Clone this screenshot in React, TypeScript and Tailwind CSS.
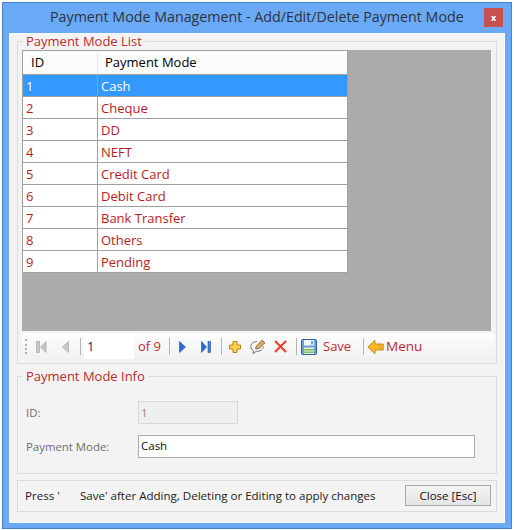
const rows = ["Cash", "Cheque", "DD", "NEFT", "Credit Card", "Debit Card", "Bank Transfer", "Others", "Pending"];
const font = "font-['Open_Sans','Noto_Sans',sans-serif]";

function Sep({ className }: { className: string }) {
  return <div className={`w-px h-[17px] bg-[#b4b4b4] shrink-0 ${className}`} />;
}

function Legend({ children }: { children: string }) {
  return <span className="absolute left-[5px] -top-[8px] bg-[#f3f3f3] px-[3px] text-[13px] leading-[15px] text-[#bd2a2e] whitespace-nowrap">{children}</span>;
}

export default function App() {
  return (
    <div className={`${font} w-[514px] h-[530px] bg-white pt-[2px] px-[2px] pb-[1px]`}>
      <div className="w-[510px] h-[527px] bg-[#6aa9f5] border border-[#4a82c4] flex flex-col">
        <div className="h-[30px] relative flex items-center shrink-0 pb-[2px]">
          <span className="ml-[47px] text-[14.25px] leading-[20px] text-[#2c3440] whitespace-nowrap">Payment Mode Management - Add/Edit/Delete Payment Mode</span>
          <span className="absolute left-[481px] top-[5px] w-[19px] h-[19px] bg-[#c75050] text-white text-[9px] font-bold flex items-center justify-center">x</span>
        </div>
        <div className="mx-[6px] h-[490px] bg-[#f3f3f3] border border-[#f6f9fe] px-[7px] pt-[7px]">
          <div className="relative h-[323px] border border-[#dcdcdc] pl-[4px] pr-[5px] pt-[8px]">
            <Legend>Payment Mode List</Legend>
            <div className="h-[281px] bg-[#ababab]">
              <div className="w-[326px] bg-white">
                <div className="flex h-[24px] bg-[#fcfcfc] border-l border-t border-r border-[#a0a0a0] text-[13px] text-black">
                  <div className="w-[75px] pl-[8px] leading-[22px] border-r border-[#e8edf5]">ID</div>
                  <div className="pl-[7px] leading-[22px]">Payment Mode</div>
                </div>
                {rows.map((r, i) => (
                  <div
                    key={r}
                    className={`flex h-[22px] border-t border-x border-[#a0a0a0] text-[13px] leading-[23px] last:border-b last:h-[23px] ${i === 0 ? "bg-[#3399ff] text-white" : "bg-white text-[#b81c1c]"}`}
                  >
                    <div className="w-[75px] pl-[3px] border-r border-[#a0a0a0]">{i + 1}</div>
                    <div className="pl-[3px]">{r}</div>
                  </div>
                ))}
              </div>
            </div>
            <div className="mt-[2px] h-[27px] w-[473px] rounded-sm bg-gradient-to-b from-[#fdfdfd] to-[#f1f1f1] flex items-center text-[13px] text-[#bd2a2e]">
              <div className="ml-[3px] w-[2px] h-[15px] border-l-2 border-dotted border-[#b0b0b0]" />
              <svg className="ml-[8px] shrink-0" width="12" height="14" viewBox="0 0 12 14">
                <rect x="1.500" y="1.500" width="3" height="11" fill="#c8c8c8" stroke="#a8a8a8" strokeWidth="0.700" />
                <path d="M11 1.500L5.500 7L11 12.500Z" fill="#c8c8c8" stroke="#a8a8a8" strokeWidth="0.700" />
              </svg>
              <svg className="ml-[14px] shrink-0" width="8" height="14" viewBox="0 0 8 14">
                <path d="M7.500 1.500L1.500 7L7.500 12.500Z" fill="#c8c8c8" stroke="#a8a8a8" strokeWidth="0.700" />
              </svg>
              <Sep className="ml-[11px]" />
              <div className="ml-[3px] w-[50px] h-[24px] bg-white pl-[3px] leading-[22px] text-[#301060] shrink-0">1</div>
              <span className="ml-[4px] w-[22px] whitespace-nowrap">of 9</span>
              <Sep className="ml-[9px]" />
              <svg className="ml-[9px] shrink-0" width="7" height="14" viewBox="0 0 7 14">
                <path d="M0.500 1.500L6.500 7L0.500 12.500Z" fill="#2a6fc9" stroke="#1c4f9c" strokeWidth="0.600" />
              </svg>
              <svg className="ml-[15px] shrink-0" width="10" height="14" viewBox="0 0 10 14">
                <path d="M0.500 1.500L5.500 7L0.500 12.500Z" fill="#2a6fc9" stroke="#1c4f9c" strokeWidth="0.600" />
                <rect x="7" y="1.500" width="2.500" height="11" fill="#3f86dc" stroke="#1c4f9c" strokeWidth="0.600" />
              </svg>
              <Sep className="ml-[10px]" />
              <svg className="ml-[7px] shrink-0" width="12" height="12" viewBox="0 0 12 12">
                <path d="M4 .500h4V4h3.500v4H8v3.500H4V8H.500V4H4z" fill="#ffd24d" stroke="#b8860b" strokeWidth="1" />
              </svg>
              <svg className="ml-[9px] shrink-0" width="16" height="16" viewBox="0 0 16 16">
                <path d="M7 2.500C3.500 2.500 .800 4.500.800 7.500c0 2 1.200 3.500 2.700 4.200L3 14.800l3.300-2.500c3.700.2 7-1.800 7-5" fill="#fafafa" stroke="#6f6f6f" strokeWidth="1" />
                <path d="M5.500 10l.9-3L12 1.200l3 2.600L9 9.500z" fill="#e3a957" stroke="#6d5c3e" strokeWidth="0.800" />
              </svg>
              <svg className="ml-[8px] shrink-0" width="13" height="13" viewBox="0 0 13 13">
                <path d="M1 1L12 12M12 1L1 12" stroke="#ee3b2b" strokeWidth="2" />
              </svg>
              <Sep className="ml-[9px]" />
              <svg className="ml-[4px] shrink-0" width="16" height="16" viewBox="0 0 16 16">
                <rect x="0.500" y="0.500" width="15" height="15" rx="1" fill="#6f9fd8" stroke="#2d5f9e" />
                <rect x="3" y="1" width="10" height="5.500" fill="#f4f8fc" />
                <rect x="10" y="2" width="2" height="3.500" fill="#6f9fd8" />
                <rect x="3" y="8.500" width="10" height="6.500" fill="#e4efd8" />
                <rect x="3" y="10" width="10" height="1.500" fill="#7fbf5f" />
                <rect x="3" y="12.500" width="10" height="1.500" fill="#7fbf5f" />
              </svg>
              <span className="ml-[6px] w-[28px]">Save</span>
              <Sep className="ml-[12px]" />
              <svg className="ml-[3px] shrink-0" width="17" height="16" viewBox="0 0 17 16">
                <path d="M.800 8L8 1.200v3.800h8.200v6H8v3.800z" fill="#fdb92e" stroke="#c98a10" strokeWidth="1" />
                <path d="M12 5.500v5M14 5.500v5" stroke="#d99a18" strokeWidth="0.800" />
              </svg>
              <span className="ml-[2px] text-[13.5px]">Menu</span>
            </div>
          </div>
          <div className="relative mt-[12px] h-[98px] border border-[#dcdcdc]">
            <Legend>Payment Mode Info</Legend>
            <div className="flex items-center h-[23px] mt-[24px] text-[11.4px] text-[#6e6e6e]">
              <span className="ml-[8px] w-[112px]">ID:</span>
              <div className="w-[100px] h-[23px] bg-[#efefef] border border-[#d8d8d8] pl-[2px] text-[11.5px] leading-[21px] text-[#8a8a8a]">1</div>
            </div>
            <div className="flex items-center h-[23px] mt-[11px] text-[11.4px] text-[#6e6e6e]">
              <span className="ml-[8px] w-[112px]">Payment Mode:</span>
              <div className="w-[337px] h-[23px] bg-white border border-[#ababab] pl-[2px] text-[11.5px] leading-[19px] text-[#111]">Cash</div>
            </div>
          </div>
          <div className="mt-[6px] h-[32px] border border-[#dcdcdc] flex items-center relative text-[11.55px] text-[#222]">
            <span className="ml-[7px] w-[55px]">Press '</span>
            <span className="whitespace-nowrap">Save' after Adding, Deleting or Editing to apply changes</span>
            <button className="absolute left-[387px] top-[4px] w-[86px] h-[21px] border border-[#a8a8a8] bg-gradient-to-b from-[#f4f4f4] to-[#e4e4e4] text-[11.5px] leading-[17px] text-[#111]">Close [Esc]</button>
          </div>
        </div>
      </div>
    </div>
  );
}
